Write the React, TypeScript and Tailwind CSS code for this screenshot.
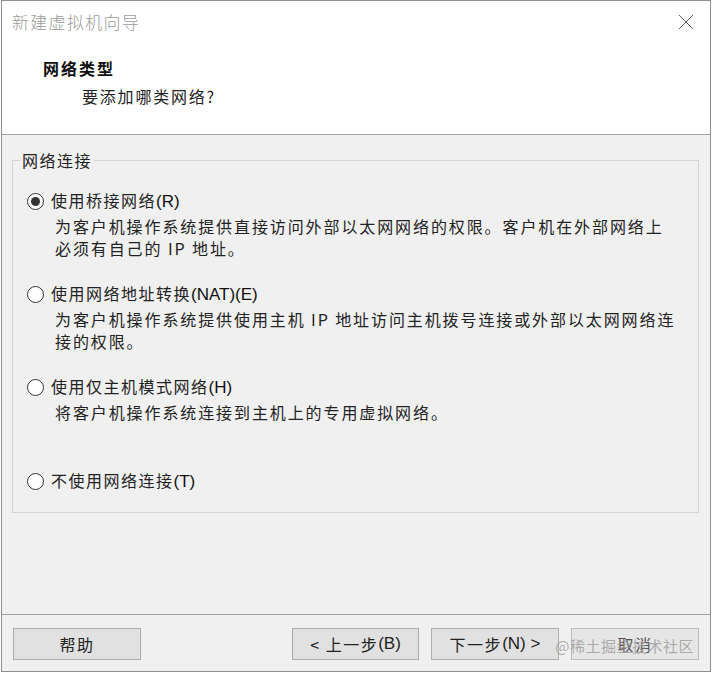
const font = "font-['Noto_Sans_CJK_SC',sans-serif]"

export default function App() {
    return (
        <div className={`w-[712px] h-[673px] bg-white ${font}`}>
            <div className="relative ml-[1px] w-[710px] h-[672px] border border-[#8f8f8f] flex flex-col">
                {/* header */}
                <div className="h-[134px] bg-white border-b border-[#a0a0a0] shrink-0">
                    <div className="flex items-start justify-between pt-[9px] pl-[10px] pr-[16px]">
                        <span className="text-[17px] leading-[24px] tracking-[1.3px] text-[#9b9b9b] font-light">新建虚拟机向导</span>
                        <svg className="mt-[4px]" width="16" height="16" viewBox="0 0 16 16">
                            <path d="M1 1 L15 15 M15 1 L1 15" stroke="#5a5a5a" strokeWidth="1" fill="none" />
                        </svg>
                    </div>
                    <div className="pl-[41px] mt-[22px] text-[16px] leading-[24px] font-bold tracking-[2px] text-[#111]">网络类型</div>
                    <div className="pl-[80px] mt-[4px] text-[16px] leading-[24px] tracking-[1.8px] text-[#222]">要添加哪类网络?</div>
                </div>

                {/* body */}
                <div className="flex-1 bg-[#f0f0f0] flex flex-col">
                    <fieldset className="mt-[13px] ml-[10px] mr-[11px] border border-[#d3d3d3] pl-[14px] pb-[19px]">
                        <legend className="-ml-[7px] px-[2px] text-[16px] leading-[24px] tracking-[1.5px] text-[#222]">网络连接</legend>
                        <div className="mt-[17px]">
                            <Option checked label="使用桥接网络" hotkey="(R)"
                                desc={["为客户机操作系统提供直接访问外部以太网网络的权限。客户机在外部网络上", "必须有自己的 IP 地址。"]} />
                        </div>
                        <div className="mt-[23px]">
                            <Option label="使用网络地址转换" hotkey="(NAT)(E)"
                                desc={["为客户机操作系统提供使用主机 IP 地址访问主机拨号连接或外部以太网网络连", "接的权限。"]} />
                        </div>
                        <div className="mt-[23px]">
                            <Option label="使用仅主机模式网络" hotkey="(H)"
                                desc={["将客户机操作系统连接到主机上的专用虚拟网络。"]} />
                        </div>
                        <div className="mt-[46px]">
                            <Option label="不使用网络连接" hotkey="(T)" desc={[]} />
                        </div>
                    </fieldset>
                </div>

                {/* footer */}
                <div className="h-[57px] shrink-0 bg-[#f0f0f0] border-t border-[#a0a0a0] flex justify-between items-start pt-[13px] pl-[11px] pr-[11px]">
                    <Button w="w-[128px]">帮助</Button>
                    <div className="flex gap-[12px]">
                        <Button w="w-[127px]">&lt; 上一步<span className="font-['Liberation_Sans',sans-serif] tracking-normal text-[17px]">(B)</span></Button>
                        <Button w="w-[128px]">下一步<span className="font-['Liberation_Sans',sans-serif] tracking-normal text-[17px]">(N) &gt;</span></Button>
                        <Button w="w-[128px]" dim>取消</Button>
                    </div>
                </div>

                <div className="absolute right-[16px] bottom-[15px] text-[15px] leading-[20px] tracking-[0.5px] text-[#9a9a9a]/80 pointer-events-none">@稀土掘金技术社区</div>
            </div>
        </div>
    )
}

function Option({ checked, label, hotkey, desc }: any) {
    return (
        <div>
            <div className="flex items-center h-[24px]">
                <span className="w-[17px] h-[17px] rounded-full border border-[#333] bg-white flex items-center justify-center">
                    {checked && <span className="w-[9px] h-[9px] rounded-full bg-[#333]" />}
                </span>
                <span className="ml-[7px] text-[16px] tracking-[1.5px] text-[#222]">
                    {label}<span className="font-['Liberation_Sans',sans-serif] tracking-normal text-[17px] text-[#111]">{hotkey}</span>
                </span>
            </div>
            {desc.length > 0 && (
                <div className="mt-[2px] pl-[28px] text-[16px] leading-[22px] tracking-[1.9px] text-[#222]">
                    {desc.map((d: string) => <div key={d}>{d}</div>)}
                </div>
            )}
        </div>
    )
}

function Button({ children, w, dim }: any) {
    return (
        <div className={`${w} h-[32px] flex items-center justify-center border text-[16px] tracking-[1.5px] ${dim ? "bg-[#e6e6e6] border-[#bdbdbd] text-[#555]" : "bg-[#e1e1e1] border-[#adadad] text-[#222]"}`}>
            {children}
        </div>
    )
}
